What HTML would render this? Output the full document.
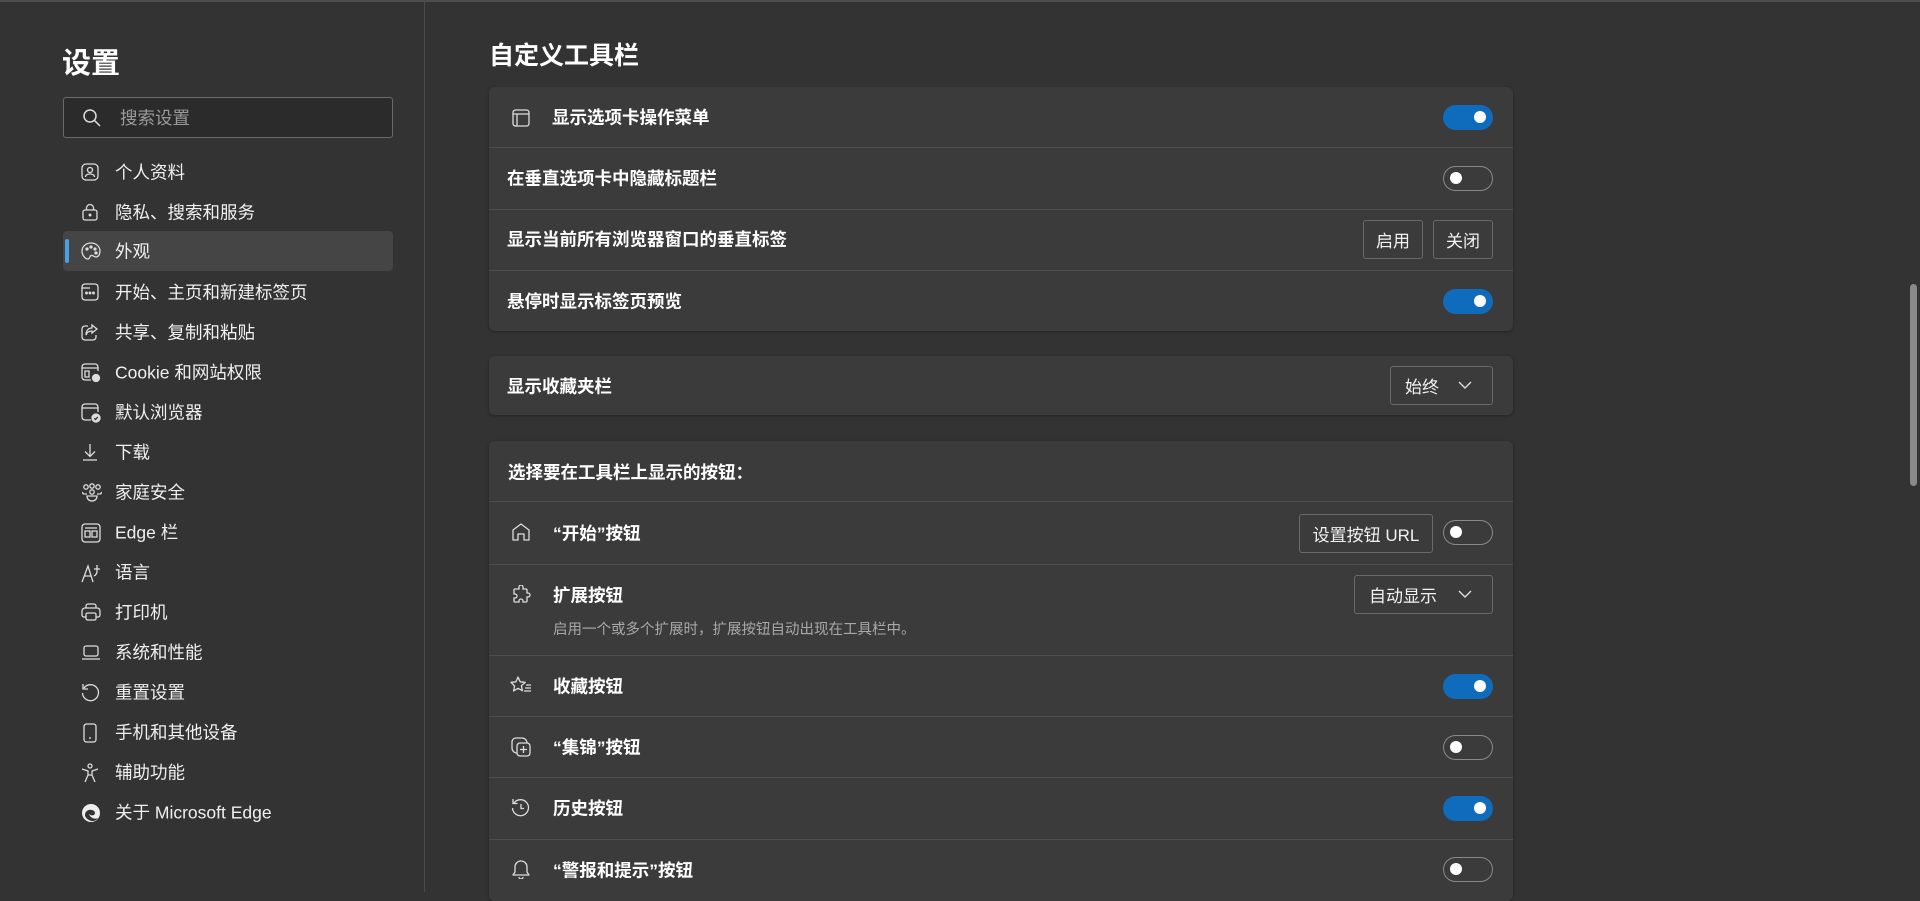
<!DOCTYPE html>
<html><head><meta charset="utf-8"><style>
*{margin:0;padding:0;box-sizing:border-box}
body{width:1920px;height:892px;background:#333333;overflow:hidden;position:relative;font-family:"Liberation Sans","Noto Sans CJK SC",sans-serif;color:#fff}
.a{position:absolute}
.topline{left:0;top:0;width:1920px;height:2px;background:#4e4e4e}
.div{left:424px;top:0;width:1px;height:892px;background:#4a4a4a}
.nav{left:63px;width:330px;height:40px;display:flex;align-items:center;font-size:17.5px;color:#f0f0f0}
.nav svg{position:absolute;left:18px;top:11px}
.nav span{position:absolute;left:52px;top:50%;transform:translateY(-50%);white-space:nowrap}
.card{left:489px;width:1024px;background:#3b3b3b;border-radius:6px;box-shadow:0 1px 3px rgba(0,0,0,.3)}
.sep{left:489px;width:1024px;height:1px;background:#4d4d4d}
.lbl{font-size:17.5px;font-weight:bold;white-space:nowrap;transform:translateY(-50%)}
.tg{width:50px;height:25px;border-radius:13px;left:1443px}
.tg.on{background:#0f6cbd}
.tg.off{border:1px solid #8a8a8a}
.tg i{position:absolute;top:6px;width:12px;height:12px;border-radius:50%;background:#fff}
.tg.on i{right:7px}
.tg.off i{left:6px;top:5px}
.btn{border:1px solid #6a6a6a;border-radius:3px;font-size:17px;display:flex;align-items:center;justify-content:center;color:#f2f2f2}
.ic{position:absolute}
</style></head><body>
<div class="a topline"></div>
<div class="a div"></div>

<div class="a" style="left:62px;top:40px;font-size:29px;font-weight:bold">设置</div>
<div class="a" style="left:63px;top:97px;width:330px;height:41px;border:1px solid #6b6b6b;border-radius:3px;background:#2b2b2b"></div>
<svg class="a" style="left:82px;top:108px" width="20" height="20" viewBox="0 0 20 20" fill="none" stroke="#ddd" stroke-width="1.5"><circle cx="8" cy="8" r="6"/><path d="M12.5 12.5L18 18"/></svg>
<div class="a" style="left:120px;top:105px;font-size:17.5px;color:#9a9a9a">搜索设置</div>

<div class="a" style="left:63px;top:231px;width:330px;height:40px;background:#454545;border-radius:4px"></div>
<div class="a" style="left:65px;top:239px;width:4px;height:24px;background:#4aa0e6;border-radius:2px"></div>

<div class="a nav" style="top:152px"><svg width="18" height="18" viewBox="0 0 18 18" fill="none" stroke="#ddd" stroke-width="1.3"><rect x="1" y="1" width="16" height="16" rx="4"/><circle cx="9" cy="7" r="2.5"/><path d="M4.5 14c0-2 2-3 4.5-3s4.5 1 4.5 3"/></svg><span>个人资料</span></div>
<div class="a nav" style="top:192px"><svg width="18" height="18" viewBox="0 0 18 18" fill="none" stroke="#ddd" stroke-width="1.3"><rect x="2" y="7" width="14" height="10" rx="2"/><path d="M5.5 7V5a3.5 3.5 0 017 0v2"/><circle cx="9" cy="12" r=".8" fill="#ddd"/></svg><span>隐私、搜索和服务</span></div>
<div class="a nav" style="top:231px"><svg width="20" height="18" viewBox="0 0 20 18" fill="none" stroke="#ddd" stroke-width="1.3"><path d="M10 1C5 1 1 4.5 1 9c0 4 3 8 6 8 2 0 1.5-3 3-3.5C12 13 13 15 15 15c2.5 0 4-3 4-6 0-4.5-4-8-9-8z"/><circle cx="6" cy="7" r="1" fill="#ddd"/><circle cx="10" cy="5" r="1" fill="#ddd"/><circle cx="14" cy="7" r="1" fill="#ddd"/><circle cx="15" cy="11" r="1" fill="#ddd"/></svg><span>外观</span></div>
<div class="a nav" style="top:272px"><svg width="18" height="18" viewBox="0 0 18 18" fill="none" stroke="#ddd" stroke-width="1.3"><rect x="1" y="1" width="16" height="16" rx="3"/><path d="M1 5h8"/><circle cx="5.5" cy="10" r=".8" fill="#ddd"/><circle cx="9" cy="10" r=".8" fill="#ddd"/><circle cx="12.5" cy="10" r=".8" fill="#ddd"/></svg><span>开始、主页和新建标签页</span></div>
<div class="a nav" style="top:312px"><svg width="18" height="18" viewBox="0 0 18 18" fill="none" stroke="#ddd" stroke-width="1.3"><path d="M7 3H4a3 3 0 00-3 3v8a3 3 0 003 3h8a3 3 0 003-3v-2"/><path d="M11 2l5 4-5 4V8c-3 0-5 1-6 4 0-4 2-7 6-7z"/></svg><span>共享、复制和粘贴</span></div>
<div class="a nav" style="top:352px"><svg width="20" height="20" viewBox="0 0 20 20" fill="none" stroke="#ddd" stroke-width="1.3"><path d="M10 17H4a3 3 0 01-3-3V4a3 3 0 013-3h10a3 3 0 013 3v4"/><path d="M1 5h16M4 8h4v6H4z"/><circle cx="15" cy="15" r="3.5" fill="#ddd"/></svg><span>Cookie 和网站权限</span></div>
<div class="a nav" style="top:392px"><svg width="20" height="20" viewBox="0 0 20 20" fill="none" stroke="#ddd" stroke-width="1.3"><path d="M10 17H4a3 3 0 01-3-3V4a3 3 0 013-3h10a3 3 0 013 3v5"/><path d="M1 5h16"/><circle cx="15" cy="15" r="4" fill="#ddd"/><path d="M13.2 15.2l1.3 1.3 2.3-2.6" stroke="#333"/></svg><span>默认浏览器</span></div>
<div class="a nav" style="top:432px"><svg width="18" height="18" viewBox="0 0 18 18" fill="none" stroke="#ddd" stroke-width="1.3"><path d="M9 1v12M4 8.5l5 5 5-5M2 17h14"/></svg><span>下载</span></div>
<div class="a nav" style="top:472px"><svg width="22" height="20" viewBox="0 0 22 20" fill="none" stroke="#ddd" stroke-width="1.3"><circle cx="5" cy="4" r="2.2"/><circle cx="11" cy="3" r="2.2"/><circle cx="17" cy="4" r="2.2"/><circle cx="11" cy="9" r="2.2"/><path d="M2 9c-1 1 0 2 1 2h3M20 9c1 1 0 2-1 2h-3M6 13c0 3 2 5 5 5s5-2 5-5z"/></svg><span>家庭安全</span></div>
<div class="a nav" style="top:512px"><svg width="20" height="20" viewBox="0 0 20 20" fill="none" stroke="#ddd" stroke-width="1.3"><rect x="1" y="1" width="18" height="18" rx="3"/><path d="M4 5h12M4 8h5v6H4zM11 8h5v6h-5z"/></svg><span>Edge 栏</span></div>
<div class="a nav" style="top:552px"><svg width="20" height="20" viewBox="0 0 20 20" fill="none" stroke="#ddd" stroke-width="1.3"><path d="M1 19L7 3l5 16M3.5 13h7M13 6h6M16 2v6c0 2-1 4-3 5"/></svg><span>语言</span></div>
<div class="a nav" style="top:592px"><svg width="20" height="18" viewBox="0 0 20 18" fill="none" stroke="#ddd" stroke-width="1.3"><path d="M5 5V3a2 2 0 012-2h6a2 2 0 012 2v2M5 14H3a2 2 0 01-2-2V8a3 3 0 013-3h12a3 3 0 013 3v4a2 2 0 01-2 2h-2"/><rect x="5" y="10" width="10" height="7" rx="1.5"/></svg><span>打印机</span></div>
<div class="a nav" style="top:632px"><svg width="20" height="18" viewBox="0 0 20 18" fill="none" stroke="#ddd" stroke-width="1.3"><rect x="3" y="3" width="14" height="10" rx="2"/><path d="M1 16h18"/></svg><span>系统和性能</span></div>
<div class="a nav" style="top:672px"><svg width="20" height="20" viewBox="0 0 20 20" fill="none" stroke="#ddd" stroke-width="1.3"><path d="M3 5a8 8 0 11-1.5 5"/><path d="M2 1v5h5"/></svg><span>重置设置</span></div>
<div class="a nav" style="top:712px"><svg width="18" height="20" viewBox="0 0 18 20" fill="none" stroke="#ddd" stroke-width="1.3"><rect x="3" y="1" width="12" height="18" rx="2.5"/><path d="M8 15h2"/></svg><span>手机和其他设备</span></div>
<div class="a nav" style="top:752px"><svg width="18" height="20" viewBox="0 0 18 20" fill="none" stroke="#ddd" stroke-width="1.3"><circle cx="9" cy="3" r="2"/><path d="M1 6l6 2v4l-3 7M17 6l-6 2v4l3 7M7 12h4"/></svg><span>辅助功能</span></div>
<div class="a nav" style="top:792px"><svg width="20" height="20" viewBox="0 0 20 20"><circle cx="10" cy="10" r="9" fill="#eee"/><path d="M4 12c0-4 4-6 7-5s4 3 2 5c-2 1-5 0-5-2 0 4 5 7 9 5-2 3-6 4-9 2-2-1-4-3-4-5z" fill="#333"/></svg><span>关于 Microsoft Edge</span></div>

<div class="a" style="left:489px;top:36px;font-size:25px;font-weight:bold">自定义工具栏</div>

<!-- card 1 -->
<div class="a card" style="top:87px;height:244px"></div>
<div class="a sep" style="top:147px"></div>
<div class="a sep" style="top:209px"></div>
<div class="a sep" style="top:270px"></div>
<svg class="a" style="left:512px;top:109px" width="18" height="18" viewBox="0 0 18 18" fill="none" stroke="#ddd" stroke-width="1.3"><rect x="1" y="1" width="16" height="16" rx="2.5"/><path d="M1 5h16M5 5v12"/></svg>
<div class="a lbl" style="left:552px;top:117px">显示选项卡操作菜单</div>
<div class="a tg on" style="top:105px"><i></i></div>
<div class="a lbl" style="left:507px;top:178px">在垂直选项卡中隐藏标题栏</div>
<div class="a tg off" style="top:166px"><i></i></div>
<div class="a lbl" style="left:507px;top:239px">显示当前所有浏览器窗口的垂直标签</div>
<div class="a btn" style="left:1363px;top:220px;width:60px;height:39px">启用</div>
<div class="a btn" style="left:1433px;top:220px;width:60px;height:39px">关闭</div>
<div class="a lbl" style="left:507px;top:301px">悬停时显示标签页预览</div>
<div class="a tg on" style="top:289px"><i></i></div>

<!-- card 2 -->
<div class="a card" style="top:356px;height:59px"></div>
<div class="a lbl" style="left:507px;top:386px">显示收藏夹栏</div>
<div class="a btn" style="left:1390px;top:366px;width:103px;height:39px;justify-content:flex-start;padding-left:14px">始终</div>
<svg class="a" style="left:1458px;top:381px" width="14" height="9" viewBox="0 0 14 9" fill="none" stroke="#ddd" stroke-width="1.4"><path d="M1 1l6 6 6-6"/></svg>

<!-- card 3 -->
<div class="a card" style="top:441px;height:460px"></div>
<div class="a sep" style="top:501px"></div>
<div class="a sep" style="top:564px"></div>
<div class="a sep" style="top:655px"></div>
<div class="a sep" style="top:716px"></div>
<div class="a sep" style="top:777px"></div>
<div class="a sep" style="top:839px"></div>
<div class="a lbl" style="left:508px;top:472px">选择要在工具栏上显示的按钮：</div>

<svg class="a" style="left:511px;top:522px" width="20" height="20" viewBox="0 0 20 20" fill="none" stroke="#ddd" stroke-width="1.3"><path d="M2 18V8l8-6 8 6v10h-5v-6H7v6z" stroke-linejoin="round"/></svg>
<div class="a lbl" style="left:553px;top:533px">“开始”按钮</div>
<div class="a btn" style="left:1299px;top:514px;width:134px;height:39px">设置按钮 URL</div>
<div class="a tg off" style="top:520px"><i></i></div>

<svg class="a" style="left:511px;top:585px" width="20" height="20" viewBox="0 0 20 20" fill="none" stroke="#ddd" stroke-width="1.3"><path d="M8 2a2 2 0 014 0v2h3a1 1 0 011 1v3h1a2 2 0 010 4h-1v4a1 1 0 01-1 1h-3v-1a2 2 0 00-4 0v1H4a1 1 0 01-1-1v-3h1a2 2 0 000-4H3V5a1 1 0 011-1h4z"/></svg>
<div class="a lbl" style="left:553px;top:595px">扩展按钮</div>
<div class="a" style="left:553px;top:618px;font-size:14.5px;color:#a8a8a8;white-space:nowrap">启用一个或多个扩展时，扩展按钮自动出现在工具栏中。</div>
<div class="a btn" style="left:1354px;top:575px;width:139px;height:39px;justify-content:flex-start;padding-left:14px">自动显示</div>
<svg class="a" style="left:1458px;top:590px" width="14" height="9" viewBox="0 0 14 9" fill="none" stroke="#ddd" stroke-width="1.4"><path d="M1 1l6 6 6-6"/></svg>

<svg class="a" style="left:510px;top:676px" width="22" height="20" viewBox="0 0 22 20" fill="none" stroke="#ddd" stroke-width="1.3"><path d="M8 1l2.2 4.8 5 .5-3.8 3.4 1 5L8 12.3 3.6 15l1-5L1 6.3l5-.5z" stroke-linejoin="round"/><path d="M16 9h5M15 12h6M14 15h7"/></svg>
<div class="a lbl" style="left:553px;top:686px">收藏按钮</div>
<div class="a tg on" style="top:674px"><i></i></div>

<svg class="a" style="left:511px;top:737px" width="20" height="20" viewBox="0 0 20 20" fill="none" stroke="#ddd" stroke-width="1.3"><path d="M6 16a5 5 0 01-5-5V5a4 4 0 014-4h6a5 5 0 015 5"/><rect x="6" y="6" width="13" height="13" rx="3"/><path d="M12.5 9v7M9 12.5h7"/></svg>
<div class="a lbl" style="left:553px;top:747px">“集锦”按钮</div>
<div class="a tg off" style="top:735px"><i></i></div>

<svg class="a" style="left:511px;top:798px" width="20" height="20" viewBox="0 0 20 20" fill="none" stroke="#ddd" stroke-width="1.3"><path d="M3 5a8 8 0 11-1.5 5"/><path d="M2 1v4.5h4.5M10 6v4.5h3"/></svg>
<div class="a lbl" style="left:553px;top:808px">历史按钮</div>
<div class="a tg on" style="top:796px"><i></i></div>

<svg class="a" style="left:512px;top:859px" width="18" height="20" viewBox="0 0 18 20" fill="none" stroke="#ddd" stroke-width="1.3"><path d="M3 13V8a6 6 0 0112 0v5l2 3H1z" stroke-linejoin="round"/><path d="M7 18a2 2 0 004 0"/></svg>
<div class="a lbl" style="left:553px;top:870px">“警报和提示”按钮</div>
<div class="a tg off" style="top:857px"><i></i></div>

<div class="a" style="left:1910px;top:284px;width:7px;height:202px;background:#8a8a8a;border-radius:4px"></div>
</body></html>
